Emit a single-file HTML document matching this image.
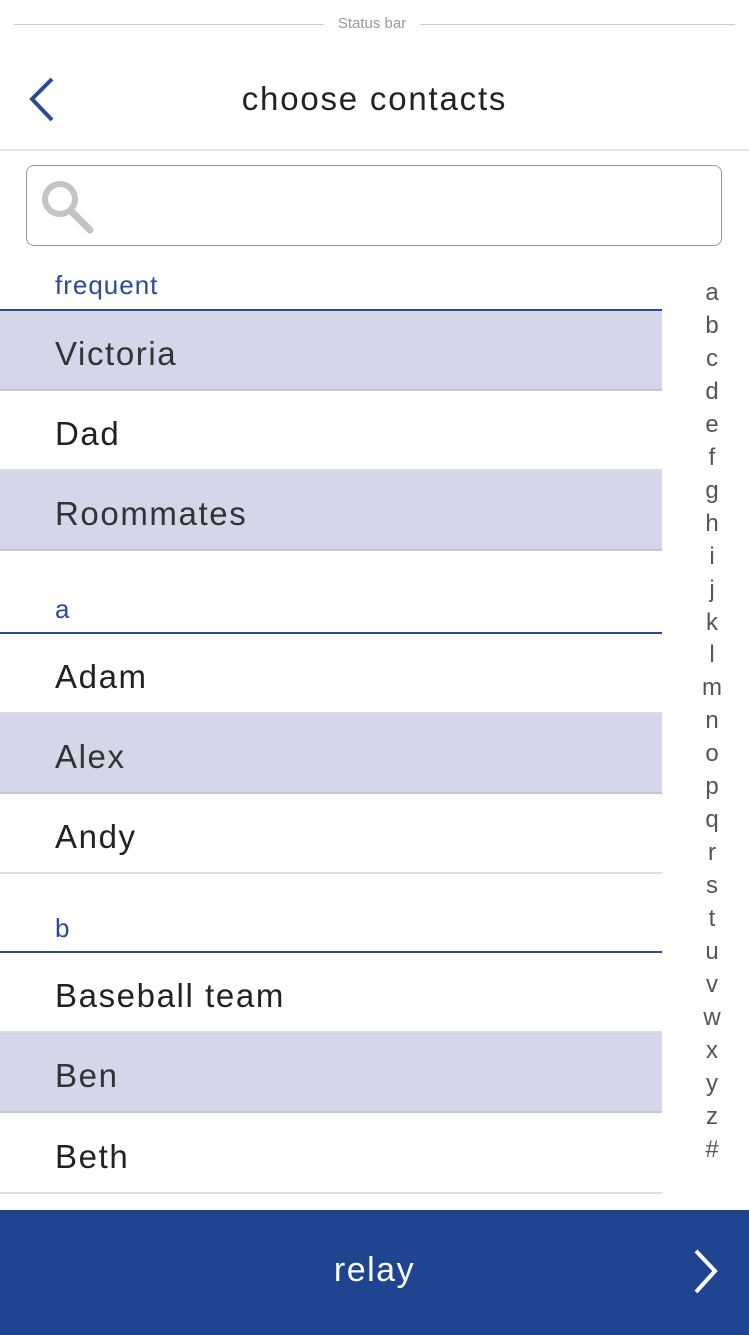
<!DOCTYPE html>
<html><head><style>
*{margin:0;padding:0;box-sizing:border-box}
body{width:749px;height:1335px;position:relative;background:#fff;font-family:"Liberation Sans",sans-serif;overflow:hidden}
.a{position:absolute}
.row{position:absolute;left:0;width:662px;height:80px;border-bottom:2px solid #dcdcdc;font-size:33px;color:#222;padding-left:55px;padding-top:3px;line-height:80px;letter-spacing:1.6px}
.hl{background:#d4d6ea;border-bottom:2px solid #c4c6d8;color:#333}
.sec{position:absolute;left:55px;font-size:26px;color:#2a4a9a;letter-spacing:1px}
.secline{position:absolute;left:0;width:662px;height:2px;background:#2a4a9a}
.alpha{position:absolute;left:696px;width:32px;text-align:center;font-size:24px;color:#555;line-height:32.96px;top:277px}
</style></head><body>
<div class="a" style="left:14px;top:24px;width:310px;height:1px;background:#ccc"></div>
<div class="a" style="left:420px;top:24px;width:315px;height:1px;background:#ccc"></div>
<div class="a" style="left:324px;top:15px;width:96px;text-align:center;font-size:15px;color:#999">Status bar</div>
<svg class="a" style="left:24px;top:76px" width="34" height="46"><path d="M28 3 L8 23 L28 44" stroke="#2a4a9a" stroke-width="4" fill="none"/></svg>
<div class="a" style="left:0;width:749px;top:80px;text-align:center;font-size:33px;color:#222;letter-spacing:1.8px">choose contacts</div>
<div class="a" style="left:0;top:149px;width:749px;height:2px;background:#e4e4e4"></div>
<div class="a" style="left:26px;top:165px;width:696px;height:81px;border:1.5px solid #999;border-radius:8px"></div>
<svg class="a" style="left:40px;top:178px" width="56" height="56"><circle cx="20" cy="21" r="15" stroke="#c4c4c4" stroke-width="6" fill="none"/><path d="M31 33 L50 52" stroke="#c4c4c4" stroke-width="7" stroke-linecap="round"/></svg>
<div class="sec" style="top:270px">frequent</div>
<div class="secline" style="top:309px"></div>
<div class="row hl" style="top:311px">Victoria</div>
<div class="row" style="top:391px">Dad</div>
<div class="row hl" style="top:471px">Roommates</div>
<div class="sec" style="top:594px">a</div>
<div class="secline" style="top:632px"></div>
<div class="row" style="top:634px">Adam</div>
<div class="row hl" style="top:714px">Alex</div>
<div class="row" style="top:794px">Andy</div>
<div class="sec" style="top:913px">b</div>
<div class="secline" style="top:951px"></div>
<div class="row" style="top:953px">Baseball team</div>
<div class="row hl" style="top:1033px">Ben</div>
<div class="row" style="top:1114px">Beth</div>
<div class="alpha">a<br>b<br>c<br>d<br>e<br>f<br>g<br>h<br>i<br>j<br>k<br>l<br>m<br>n<br>o<br>p<br>q<br>r<br>s<br>t<br>u<br>v<br>w<br>x<br>y<br>z<br>#</div>
<div class="a" style="left:0;top:1210px;width:749px;height:125px;background:#1f4591"></div>
<div class="a" style="left:0;top:1251px;width:749px;text-align:center;font-size:34px;color:#fff;letter-spacing:1.5px">relay</div>
<svg class="a" style="left:690px;top:1248px" width="34" height="46"><path d="M6 3 L25 23 L6 44" stroke="#fff" stroke-width="4" fill="none"/></svg>
</body></html>
